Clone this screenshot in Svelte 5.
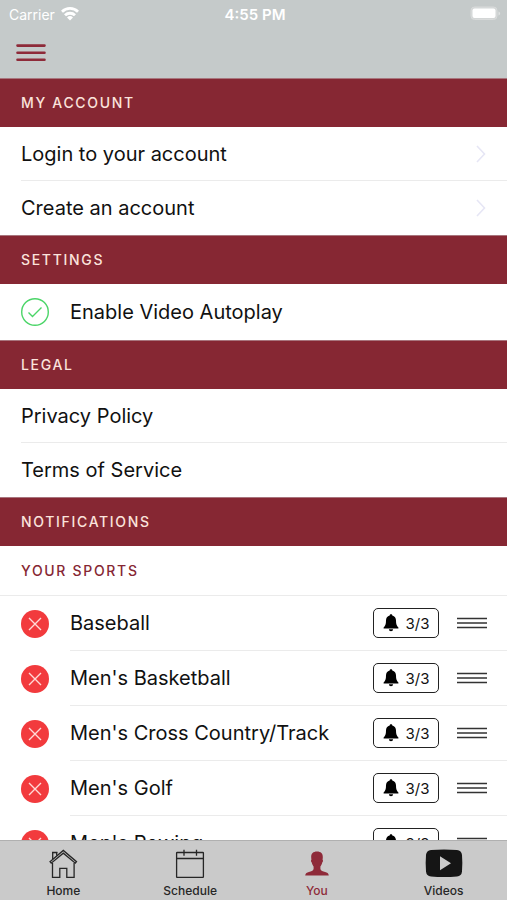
<script>
  let autoplay = $state(true);
  let active = $state('You');
  let sports = $state([
    'Baseball',
    "Men's Basketball",
    "Men's Cross Country/Track",
    "Men's Golf",
    "Men's Rowing"
  ]);
  const tabs = ['Home', 'Schedule', 'You', 'Videos'];

  function remove(name) {
    sports = sports.filter((s) => s !== name);
  }
</script>

<div class="app">
  <header>
    <div class="status">
      <div class="carrier">
        <span>Carrier</span>
        <svg width="18" height="14" viewBox="0 0 18 14" aria-hidden="true">
          <g fill="none" stroke="#fff" stroke-width="2.8">
            <path d="M1 4.700a11.400 11.400 0 0 1 16 0" />
            <path d="M4 8.300a7.100 7.100 0 0 1 10 0" />
          </g>
          <path d="M6 10.500a4.300 4.300 0 0 1 6 0L9 13.500z" fill="#fff" />
        </svg>
      </div>
      <div class="clock">4:55 PM</div>
      <svg class="battery" width="31" height="16" viewBox="0 0 31 16" aria-hidden="true">
        <rect x="1" y="1" width="26" height="12.500" rx="3.500" fill="#d3d6d6" stroke="#d9dbdb" />
        <rect x="2.500" y="2.500" width="23" height="9.500" rx="2" fill="#fff" />
        <path d="M28.500 5.500v4q1.600-.6 1.600-2t-1.600-2z" fill="#dfe1e1" />
      </svg>
    </div>
    <button class="menu" aria-label="Menu">
      <svg width="30" height="18" viewBox="0 0 30 18" aria-hidden="true">
        <path d="M1.500 1.600h27M1.500 8.700h27M1.500 15.800h27" stroke="#8e2a39" stroke-width="2.600" stroke-linecap="round" />
      </svg>
    </button>
  </header>

  <main>
    <h2>MY ACCOUNT</h2>
    <ul>
      {#each ['Login to your account', 'Create an account'] as item}
        <li>
          <a href="#account">
            <span>{item}</span>
            <svg width="10" height="18" viewBox="0 0 10 18" aria-hidden="true">
              <path d="M1 1l7.500 8L1 17" fill="none" stroke="#e6e6f5" stroke-width="1.600" />
            </svg>
          </a>
        </li>
      {/each}
    </ul>

    <h2>SETTINGS</h2>
    <label class="setting">
      <span class="check">
        <input type="checkbox" bind:checked={autoplay} />
        <svg width="28" height="28" viewBox="0 0 28 28" aria-hidden="true">
          <circle cx="14" cy="14" r="13.300" />
          {#if autoplay}<path d="M7.500 14.500l4 4L20.500 9.500" />{/if}
        </svg>
      </span>
      Enable Video Autoplay
    </label>

    <h2>LEGAL</h2>
    <ul>
      <li><a href="#privacy">Privacy Policy</a></li>
      <li><a href="#terms">Terms of Service</a></li>
    </ul>

    <h2>NOTIFICATIONS</h2>
    <h3>YOUR SPORTS</h3>
    <ul class="sports">
      {#each sports as sport (sport)}
        <li>
          <button class="remove" aria-label={`Remove ${sport}`} onclick={() => remove(sport)}>
            <svg width="28" height="28" viewBox="0 0 28 28" aria-hidden="true">
              <circle cx="14" cy="14" r="14" fill="#f23a3d" />
              <path d="M8 8l12 12M20 8L8 20" stroke="#ffd9d6" stroke-width="1.400" />
            </svg>
          </button>
          <div class="sport">
            <span class="name">{sport}</span>
            <button class="alerts">
              <svg width="16" height="18" viewBox="0 0 16 18" aria-hidden="true">
                <path d="M8 .3c-.8 0-1.300.5-1.300 1.200C4.300 2.100 3 4 3 6.500c0 3.900-.7 5.300-2.400 7v.9h14.800v-.9c-1.700-1.700-2.400-3.100-2.400-7 0-2.500-1.300-4.400-3.700-5C9.300.8 8.800.3 8 .3zM5.900 15.200a2.100 2.100 0 0 0 4.200 0z" />
              </svg>
              3/3
            </button>
            <button class="drag" aria-label={`Reorder ${sport}`}>
              <svg width="30" height="13" viewBox="0 0 30 13" aria-hidden="true">
                <path d="M0 1.500h30M0 6h30M0 10.500h30" stroke="#333" stroke-width="1.700" />
              </svg>
            </button>
          </div>
        </li>
      {/each}
    </ul>
  </main>

  <nav>
    {#each tabs as tab}
      <button class:active={active === tab} onclick={() => (active = tab)}>
        {#if tab === 'Home'}
          <svg width="30" height="30" viewBox="0 0 30 30" aria-hidden="true">
            <g fill="none" stroke="#262626" stroke-width="1.300">
              <path d="M4.500 14v14.400h7.300v-9h7v9h7.300V14" />
              <path d="M2 12.700L15.300 1.400l13.200 11.300-1.200 1.500L15.300 4.200 3.200 14.200z" />
              <path d="M4.700 10V3.600h4v3" />
              <path d="M4 3.400h5.400" />
            </g>
          </svg>
        {:else if tab === 'Schedule'}
          <svg width="30" height="30" viewBox="0 0 30 30" aria-hidden="true">
            <g fill="none" stroke="#262626" stroke-width="1.300">
              <rect x="1.600" y="3.500" width="26.800" height="24.900" rx=".6" />
              <path d="M1.600 9.500h26.800M9 .8v6M21.500.8v6" />
            </g>
          </svg>
        {:else if tab === 'You'}
          <svg width="30" height="30" viewBox="0 0 30 30" aria-hidden="true">
            <path d="M15 2.600c3.800 0 6 2.100 5.800 5.800l-.2 2.300c.7.300.4 2.300-.4 2.800-.3 1.900-1.100 3.100-1.800 4v2.400c.5 1.800 2.500 2.400 4.700 3.100 2 .6 3.400 1.200 3.700 3.400H3.200c.3-2.200 1.700-2.800 3.700-3.400 2.200-.7 4.200-1.300 4.700-3.100v-2.400c-.7-.9-1.500-2.100-1.800-4-.8-.5-1.100-2.500-.4-2.800l-.2-2.300C9 4.700 11.200 2.600 15 2.600z" fill="currentColor" />
          </svg>
        {:else}
          <svg width="38" height="30" viewBox="0 0 38 30" aria-hidden="true">
            <path d="M6 1Q19 0 32 1q4.500.3 5 5 .7 8.300 0 16.600-.5 4.700-5 5-13 1-26 0-4.500-.3-5-5-.7-8.300 0-16.600.5-4.700 5-5zM15 7.300v14L26 14.300z" fill="#151515" fill-rule="evenodd" />
          </svg>
        {/if}
        <span>{tab}</span>
      </button>
    {/each}
  </nav>
</div>

<style>
  :global(body) {
    margin: 0;
  }

  .app {
    display: flex;
    flex-direction: column;
    height: 100vh;
    background: #fff;
    color: #111;
    font-family: Inter, "Liberation Sans", sans-serif;
    font-size: 20px;
  }

  button {
    margin: 0;
    padding: 0;
    border: 0;
    background: none;
    color: inherit;
    font: inherit;
    cursor: pointer;
  }

  svg {
    display: block;
    flex: none;
  }

  header {
    flex: none;
    padding-bottom: 16px;
    background: #c5caca;
  }

  .status {
    display: grid;
    grid-template-columns: 1fr auto 1fr;
    align-items: center;
    height: 28px;
    padding: 0 6px 0 9px;
    color: #fff;
    font-size: 14px;
  }

  .carrier {
    display: flex;
    align-items: center;
    gap: 6px;
  }

  .clock {
    font-size: 15px;
    font-weight: 600;
  }

  .battery {
    justify-self: end;
  }

  .menu {
    display: block;
    margin-left: 16px;
    padding: 16px 0 0;
  }

  main {
    flex: 1;
    min-height: 0;
    overflow-y: auto;
    scrollbar-width: none;
  }

  h2,
  h3 {
    box-sizing: border-box;
    margin: 0;
    padding: 0 21px;
    font-size: 14px;
    font-weight: 500;
    letter-spacing: 0.12em;
  }

  h2 {
    height: 49px;
    border-top: 1px solid #a8757d;
    background: #862733;
    color: #fbe3dc;
    line-height: 48px;
  }

  h3 {
    height: 50px;
    border-bottom: 1px solid #ebebeb;
    color: #862733;
    line-height: 50px;
  }

  ul {
    margin: 0;
    padding: 0;
    list-style: none;
  }

  li {
    margin-left: 21px;
  }

  li a {
    display: flex;
    box-sizing: border-box;
    align-items: center;
    justify-content: space-between;
    height: 54px;
    padding-right: 21px;
    border-bottom: 1px solid #ebebeb;
    color: inherit;
    text-decoration: none;
  }

  li:last-child a {
    border-color: transparent;
  }

  .setting {
    display: flex;
    align-items: center;
    gap: 21px;
    height: 56px;
    padding: 0 21px;
  }

  .check {
    display: grid;
  }

  .check input,
  .check svg {
    grid-area: 1 / 1;
  }

  .check input {
    width: 28px;
    height: 28px;
    margin: 0;
    appearance: none;
  }

  .check svg {
    fill: none;
    stroke: #4bd568;
    stroke-width: 1.4;
    pointer-events: none;
  }

  .sports li {
    display: flex;
    align-items: center;
    gap: 21px;
  }

  .sport {
    display: flex;
    box-sizing: border-box;
    flex: 1;
    align-items: center;
    height: 55px;
    padding-right: 20px;
    border-bottom: 1px solid #ebebeb;
  }

  .name {
    flex: 1;
  }

  .alerts {
    display: flex;
    box-sizing: border-box;
    align-items: center;
    justify-content: center;
    gap: 7px;
    width: 66px;
    height: 30px;
    margin-right: 18px;
    border: 1px solid #222;
    border-radius: 5px;
    font-size: 15px;
  }

  nav {
    display: grid;
    flex: none;
    grid-template-columns: repeat(4, 1fr);
    box-sizing: border-box;
    height: 60px;
    border-top: 1px solid #b0b0b0;
    background: #cacaca;
  }

  nav button {
    display: flex;
    flex-direction: column;
    align-items: center;
    gap: 4px;
    padding-top: 8px;
    color: #262626;
    font-size: 12px;
    font-weight: 500;
    line-height: 16px;
  }

  nav .active {
    color: #8e2a39;
  }
</style>
